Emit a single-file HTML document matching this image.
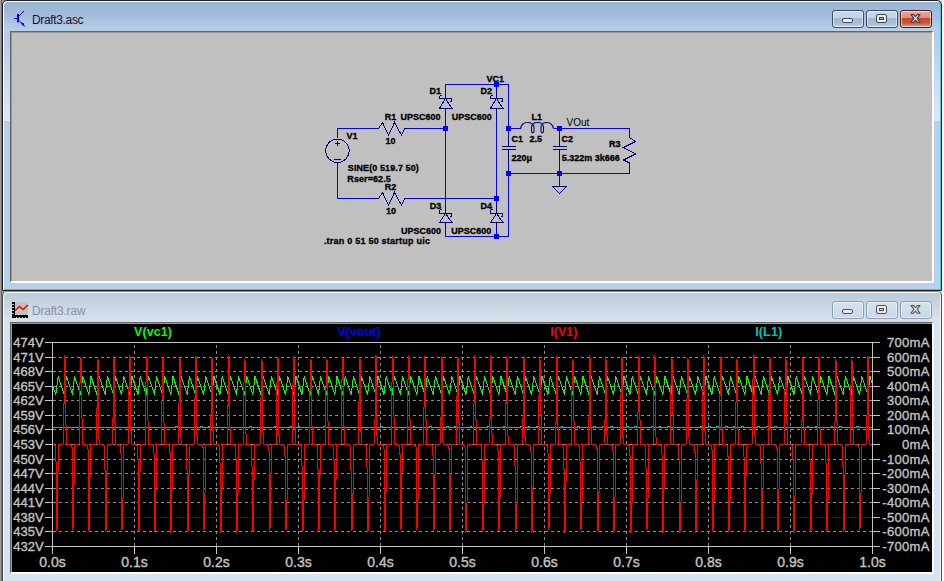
<!DOCTYPE html>
<html><head><meta charset="utf-8">
<style>
html,body{margin:0;padding:0}
body{width:944px;height:581px;overflow:hidden;position:relative;background:#fff;font-family:"Liberation Sans",sans-serif}
.abs{position:absolute}
#w1{left:2px;top:0;width:938px;height:289px;border:1px solid #1c1c1c;border-radius:5px 5px 0 0;
 background:linear-gradient(#97b2d2 0px,#a3bcda 14px,#b8cfe9 29px,#b9d0ea 100%);
 box-shadow:inset 1px 1px 0 #fff, inset -1px -1px 0 #3ec6ea}
#w2{left:2px;top:291px;width:938px;height:300px;border:1px solid #4c4c4c;border-top-color:#8e8e8e;border-radius:5px 5px 0 0;
 background:linear-gradient(#bccad8 0px,#c9d6e3 14px,#d6e2ee 29px,#d6e3f0 100%);
 box-shadow:inset 1px 1px 0 #f4f7fb, inset -1px 0 0 #f4f7fb}
.client{position:absolute;overflow:hidden}
#c1{left:10px;top:31px;width:921px;height:249px;background:#c0c0c0;
 border-top:1px solid #646464;border-left:1px solid #646464;border-right:2px solid #fff;border-bottom:2px solid #fff;
 box-shadow:inset 1px 1px 0 #989898}
#c2{left:10px;top:322px;width:921px;height:249px;background:#000;
 border-top:1px solid #646464;border-left:1px solid #646464;border-right:2px solid #fff;border-bottom:2px solid #fff;
 box-shadow:inset 1px 1px 0 #989898}
.btn{position:absolute;width:30px;height:16px;border:1px solid #3e4b5c;border-radius:3px;
 background:linear-gradient(#c6d7ea 0,#c2d4e9 7px,#a0b8d3 7px,#a9c0da 13px,#c4d6ea 16px);
 box-shadow:inset 0 0 0 1px rgba(255,255,255,.55)}
.btn.close{border-color:#4a1d1d;background:linear-gradient(#e9a99b 0,#dc8d7d 7px,#c3462a 7px,#c9553a 12px,#e0a08e 16px)}
.btn2{position:absolute;width:30px;height:16px;border:1px solid #8d9db3;border-radius:3px;
 background:linear-gradient(#d5e1ed,#cad8e7);box-shadow:inset 0 0 0 1px rgba(255,255,255,.5)}
.title{position:absolute;font-size:12px;white-space:nowrap}
svg{position:absolute;left:0;top:0}
</style></head><body>
<div class="abs" style="left:0;top:0;width:1px;height:581px;background:#a0a0a0"></div>
<div class="abs" style="left:1px;top:0;width:1px;height:581px;background:#6a6a6a"></div>
<div class="abs" style="left:2px;top:0;width:6px;height:6px;background:#8c8c8c"></div>
<div class="abs" style="left:936px;top:0;width:6px;height:6px;background:#d4d4d4"></div>
<div class="abs" style="left:2px;top:291px;width:6px;height:6px;background:#9a9a9a"></div>
<div class="abs" style="left:936px;top:291px;width:6px;height:6px;background:#d4d4d4"></div>
<div id="w1" class="abs"></div>
<div class="abs" style="left:4px;top:31px;width:6px;height:90px;background:linear-gradient(#b3cae5,#c8daee 50%,#dde8f4)"></div>
<div class="abs" style="left:934px;top:31px;width:6px;height:90px;background:linear-gradient(#b3cae5,#c8daee 50%,#dde8f4)"></div>
<div id="w2" class="abs"></div>

<!-- top window title -->
<svg width="944" height="40" style="left:0;top:0">
 <g stroke="#0000f0" fill="none">
  <path d="M14,18.5 H17" stroke-width="1"/>
  <path d="M18,14 V22.5" stroke-width="2"/>
  <path d="M19,16 L24,11" stroke-width="1"/>
  <path d="M19,20.5 L25,26.5" stroke-width="1"/>
  <path d="M21.5,23 L23.5,23.5 L23,25.5 Z" fill="#0000f0" stroke-width="1"/>
 </g>
</svg>
<div class="title" style="left:32px;top:13px;color:#1a1030;font-size:12px;letter-spacing:-0.35px">Draft3.asc</div>
<div class="btn" style="left:832px;top:10px"></div>
<div class="btn" style="left:866px;top:10px"></div>
<div class="btn close" style="left:900px;top:10px"></div>
<svg width="944" height="40" style="left:0;top:0">
 <rect x="842.5" y="18.5" width="10" height="4" rx="1.5" fill="#f0f0ee" stroke="#3c4450"/>
 <rect x="876.5" y="14.5" width="10" height="8" rx="1.5" fill="#f0f0ee" stroke="#3c4450"/>
 <rect x="879.5" y="17.5" width="4" height="2" fill="#9ab3d0" stroke="#3c4450"/>
 <path d="M911,14.6 H913.6 L915.5,16.7 L917.4,14.6 H920 L917,18.4 L920,22.2 H917.4 L915.5,20.1 L913.6,22.2 H911 L914,18.4 Z" fill="#f4f4f4" stroke="#3a3a44" stroke-width="1.1" stroke-linejoin="round"/>
</svg>

<div id="c1" class="client">
 <svg width="944" height="300" style="left:-11px;top:-32px" shape-rendering="crispEdges"><rect x="337" y="128" width="39" height="1" fill="#0000ff"/><rect x="407" y="128" width="39" height="1" fill="#0000ff"/><rect x="337" y="128" width="1" height="10" fill="#0000ff"/><rect x="337" y="162" width="1" height="37" fill="#0000ff"/><rect x="337" y="198" width="39" height="1" fill="#0000ff"/><rect x="407" y="198" width="90" height="1" fill="#0000ff"/><rect x="445" y="84" width="64" height="1" fill="#0000ff"/><rect x="445" y="84" width="1" height="7" fill="#0000ff"/><rect x="445" y="116" width="1" height="90" fill="#0000ff"/><rect x="445" y="230" width="1" height="7" fill="#0000ff"/><rect x="496" y="84" width="1" height="7" fill="#0000ff"/><rect x="496" y="116" width="1" height="90" fill="#0000ff"/><rect x="496" y="230" width="1" height="7" fill="#0000ff"/><rect x="445" y="236" width="64" height="1" fill="#0000ff"/><rect x="508" y="84" width="1" height="52" fill="#0000ff"/><rect x="508" y="160" width="1" height="77" fill="#0000ff"/><rect x="508" y="128" width="13" height="1" fill="#0000ff"/><rect x="554" y="128" width="76" height="1" fill="#0000ff"/><rect x="559" y="128" width="1" height="8" fill="#0000ff"/><rect x="559" y="160" width="1" height="27" fill="#0000ff"/><rect x="508" y="173" width="122" height="1" fill="#0000ff"/><rect x="629" y="128" width="1" height="9" fill="#0000ff"/><rect x="629" y="164" width="1" height="10" fill="#0000ff"/><rect x="445" y="91" width="1" height="7" fill="#000080"/><rect x="445" y="109" width="1" height="7" fill="#000080"/><rect x="445" y="206" width="1" height="7" fill="#000080"/><rect x="445" y="223" width="1" height="7" fill="#000080"/><rect x="496" y="91" width="1" height="7" fill="#000080"/><rect x="496" y="109" width="1" height="7" fill="#000080"/><rect x="496" y="206" width="1" height="7" fill="#000080"/><rect x="496" y="223" width="1" height="7" fill="#000080"/><rect x="508" y="136" width="1" height="10" fill="#000080"/><rect x="508" y="150" width="1" height="10" fill="#000080"/><rect x="502" y="146" width="14" height="1" fill="#000080"/><rect x="502" y="149" width="14" height="1" fill="#000080"/><rect x="559" y="136" width="1" height="10" fill="#000080"/><rect x="559" y="150" width="1" height="10" fill="#000080"/><rect x="553" y="146" width="14" height="1" fill="#000080"/><rect x="553" y="149" width="14" height="1" fill="#000080"/><rect x="376" y="128" width="3" height="1" fill="#000080"/><rect x="405" y="128" width="2" height="1" fill="#000080"/><rect x="376" y="198" width="3" height="1" fill="#000080"/><rect x="405" y="198" width="2" height="1" fill="#000080"/><path d="M439.5,95.5 V98.5 H451.5 V101.5 H449.5 M439.5,95.5 H441.5 M445.5,98.5 L439.5,108.5 H452.0 Z M490.5,95.5 V98.5 H502.5 V101.5 H500.5 M490.5,95.5 H492.5 M496.5,98.5 L490.5,108.5 H503.0 Z M439.5,209.5 V213.5 H451.5 V216.5 H449.5 M439.5,209.5 H441.5 M445.5,213.5 L439.5,222.5 H452.0 Z M490.5,209.5 V213.5 H502.5 V216.5 H500.5 M490.5,209.5 H492.5 M496.5,213.5 L490.5,222.5 H503.0 Z M378.5,128.5 L382.5,122.5 L388.5,135.2 L394.5,122.5 L401.5,135.2 L405,128.5 M378.5,198.5 L382.5,192.5 L388.5,205.2 L394.5,192.5 L401.5,205.2 L405,198.5 M629.5,136.5 V137.5 L635.5,141.5 L623.5,147.5 L635.5,154 L623.5,160 L629.5,163 V164 M552.5,186.5 H566.5 L559.5,193.5 Z M337.5,139 A11.7,11.7 0 1 1 337.4,139 Z M335,143.5 H340 M337.5,141 V146 M334,159.5 H341" fill="none" stroke="#000080" stroke-width="1"/><path d="M520.5,128.5 C521.5,124.5 523.5,122.5 527,122.5 C531,122.5 534,123.5 534,127.5 L534,131 C534,133.5 531.5,133.5 531.5,131 L531.5,127.5 C531.5,123.5 534,122.5 537.5,122.5 C541,122.5 543.5,123.5 543.5,127.5 L543.5,131 C543.5,133.5 541,133.5 541,131 L541,127.5 C541,123.5 543.5,122.5 547,122.5 C550.5,122.5 552.5,124.5 553.5,128.5" fill="none" stroke="#000080" stroke-width="1.1" shape-rendering="geometricPrecision"/><rect x="443" y="126" width="5" height="5" fill="#0000ff"/><rect x="506" y="126" width="5" height="5" fill="#0000ff"/><rect x="557" y="126" width="5" height="5" fill="#0000ff"/><rect x="494" y="82" width="5" height="5" fill="#0000ff"/><rect x="494" y="196" width="5" height="5" fill="#0000ff"/><rect x="494" y="234" width="5" height="5" fill="#0000ff"/><rect x="506" y="171" width="5" height="5" fill="#0000ff"/><rect x="557" y="171" width="5" height="5" fill="#0000ff"/><g font-family="Liberation Sans" fill="#000" stroke="#000" stroke-width="0.3"><text transform="translate(429.4,94) scale(1,1.08)" x="0" y="0" font-size="9" font-weight="bold">D1</text><text transform="translate(480.4,94) scale(1,1.08)" x="0" y="0" font-size="9" font-weight="bold">D2</text><text transform="translate(486.4,82) scale(1,1.08)" x="0" y="0" font-size="9" font-weight="bold">VC1</text><text transform="translate(384.7,120) scale(1,1.08)" x="0" y="0" font-size="9" font-weight="bold">R1</text><text transform="translate(400.59999999999997,120) scale(1,1.08)" x="0" y="0" font-size="9" font-weight="bold">UPSC600</text><text transform="translate(451.79999999999995,120) scale(1,1.08)" x="0" y="0" font-size="9" font-weight="bold">UPSC600</text><text transform="translate(531.4,120.2) scale(1,1.08)" x="0" y="0" font-size="9" font-weight="bold">L1</text><text x="566.5" y="126" font-size="10" stroke-width="0">VOut</text><text transform="translate(346.4,139) scale(1,1.08)" x="0" y="0" font-size="9" font-weight="bold">V1</text><text transform="translate(385.4,144) scale(1,1.08)" x="0" y="0" font-size="9" font-weight="bold">10</text><text transform="translate(511.4,142) scale(1,1.08)" x="0" y="0" font-size="9" font-weight="bold">C1</text><text transform="translate(529.6,142) scale(1,1.08)" x="0" y="0" font-size="9" font-weight="bold">2.5</text><text transform="translate(561.4,141.5) scale(1,1.08)" x="0" y="0" font-size="9" font-weight="bold">C2</text><text transform="translate(608.9,146.7) scale(1,1.08)" x="0" y="0" font-size="9" font-weight="bold">R3</text><text transform="translate(511.4,161) scale(1,1.08)" x="0" y="0" font-size="9" font-weight="bold">220μ</text><text transform="translate(561.8,161) scale(1,1.08)" x="0" y="0" font-size="9" font-weight="bold">5.322m 3k666</text><text transform="translate(347.79999999999995,170.7) scale(1,1.08)" x="0" y="0" font-size="9" font-weight="bold" textLength="71" lengthAdjust="spacing">SINE(0 519.7 50)</text><text transform="translate(347.29999999999995,181.7) scale(1,1.08)" x="0" y="0" font-size="9" font-weight="bold" textLength="43.5" lengthAdjust="spacing">Rser=62.5</text><text transform="translate(384.79999999999995,189.8) scale(1,1.08)" x="0" y="0" font-size="9" font-weight="bold">R2</text><text transform="translate(429.7,209.3) scale(1,1.08)" x="0" y="0" font-size="9" font-weight="bold">D3</text><text transform="translate(480.5,209.3) scale(1,1.08)" x="0" y="0" font-size="9" font-weight="bold">D4</text><text transform="translate(386.09999999999997,214) scale(1,1.08)" x="0" y="0" font-size="9" font-weight="bold">10</text><text transform="translate(400.9,234.3) scale(1,1.08)" x="0" y="0" font-size="9" font-weight="bold">UPSC600</text><text transform="translate(451.2,234.3) scale(1,1.08)" x="0" y="0" font-size="9" font-weight="bold">UPSC600</text><text transform="translate(323.9,244) scale(1,1.08)" x="0" y="0" font-size="9" font-weight="bold" textLength="106" lengthAdjust="spacing">.tran 0 51 50 startup uic</text></g></svg>
</div>

<!-- bottom window title -->
<svg width="944" height="40" style="left:0;top:290px">
 <rect x="15" y="12" width="13" height="14" fill="#c0c0c0"/>
 <path d="M15,20.5 L19.5,16.5 L23,19.5 L28,15" stroke="#ff0000" stroke-width="1.6" fill="none"/>
 <rect x="12" y="12" width="3" height="16" fill="#000"/>
 <rect x="12" y="25" width="16" height="3" fill="#000"/>
 <g fill="#c0c0c0"><rect x="12" y="14" width="2" height="1"/><rect x="12" y="17" width="2" height="1"/><rect x="12" y="20" width="2" height="1"/><rect x="12" y="23" width="2" height="1"/>
 <rect x="16" y="27" width="1" height="1"/><rect x="19" y="27" width="1" height="1"/><rect x="22" y="27" width="1" height="1"/><rect x="25" y="27" width="1" height="1"/></g>
</svg>
<div class="title" style="left:32px;top:304px;color:#8e8e9c;font-size:12px;letter-spacing:-0.2px">Draft3.raw</div>
<div class="btn2" style="left:832px;top:301px"></div>
<div class="btn2" style="left:866px;top:301px"></div>
<div class="btn2" style="left:900px;top:301px"></div>
<svg width="944" height="40" style="left:0;top:291px">
 <rect x="842.5" y="18.5" width="10" height="4" rx="1.5" fill="#eeeeec" stroke="#4a4f58"/>
 <rect x="876.5" y="14.5" width="10" height="8" rx="1.5" fill="#eeeeec" stroke="#4a4f58"/>
 <rect x="879.5" y="17.5" width="4" height="2" fill="#c8d6e6" stroke="#4a4f58"/>
 <path d="M911,14.6 H913.6 L915.5,16.7 L917.4,14.6 H920 L917,18.4 L920,22.2 H917.4 L915.5,20.1 L913.6,22.2 H911 L914,18.4 Z" fill="#f4f4f4" stroke="#55555c" stroke-width="1.1" stroke-linejoin="round"/>
</svg>

<div id="c2" class="client">
 <svg width="944" height="600" style="left:-11px;top:-323px" shape-rendering="crispEdges"><line x1="53" y1="357.5" x2="872" y2="357.5" stroke="#8c8c8c" stroke-dasharray="3 3"/><line x1="53" y1="371.5" x2="872" y2="371.5" stroke="#8c8c8c" stroke-dasharray="3 3"/><line x1="53" y1="386.5" x2="872" y2="386.5" stroke="#8c8c8c" stroke-dasharray="3 3"/><line x1="53" y1="400.5" x2="872" y2="400.5" stroke="#8c8c8c" stroke-dasharray="3 3"/><line x1="53" y1="415.5" x2="872" y2="415.5" stroke="#8c8c8c" stroke-dasharray="3 3"/><line x1="53" y1="429.5" x2="872" y2="429.5" stroke="#8c8c8c" stroke-dasharray="3 3"/><line x1="53" y1="444.5" x2="872" y2="444.5" stroke="#8c8c8c" stroke-dasharray="3 3"/><line x1="53" y1="459.5" x2="872" y2="459.5" stroke="#8c8c8c" stroke-dasharray="3 3"/><line x1="53" y1="473.5" x2="872" y2="473.5" stroke="#8c8c8c" stroke-dasharray="3 3"/><line x1="53" y1="488.5" x2="872" y2="488.5" stroke="#8c8c8c" stroke-dasharray="3 3"/><line x1="53" y1="502.5" x2="872" y2="502.5" stroke="#8c8c8c" stroke-dasharray="3 3"/><line x1="53" y1="517.5" x2="872" y2="517.5" stroke="#8c8c8c" stroke-dasharray="3 3"/><line x1="53" y1="531.5" x2="872" y2="531.5" stroke="#8c8c8c" stroke-dasharray="3 3"/><line x1="134.5" y1="345" x2="134.5" y2="546" stroke="#8c8c8c" stroke-dasharray="3 3"/><line x1="216.5" y1="345" x2="216.5" y2="546" stroke="#8c8c8c" stroke-dasharray="3 3"/><line x1="298.5" y1="345" x2="298.5" y2="546" stroke="#8c8c8c" stroke-dasharray="3 3"/><line x1="380.5" y1="345" x2="380.5" y2="546" stroke="#8c8c8c" stroke-dasharray="3 3"/><line x1="462.5" y1="345" x2="462.5" y2="546" stroke="#8c8c8c" stroke-dasharray="3 3"/><line x1="544.5" y1="345" x2="544.5" y2="546" stroke="#8c8c8c" stroke-dasharray="3 3"/><line x1="626.5" y1="345" x2="626.5" y2="546" stroke="#8c8c8c" stroke-dasharray="3 3"/><line x1="708.5" y1="345" x2="708.5" y2="546" stroke="#8c8c8c" stroke-dasharray="3 3"/><line x1="790.5" y1="345" x2="790.5" y2="546" stroke="#8c8c8c" stroke-dasharray="3 3"/><polyline points="53.00,427.50 175.00,427.50 175.50,426.50 177.50,426.50 178.00,427.50 200.00,427.50 200.50,426.50 202.50,426.50 203.00,427.50 208.00,427.50 208.50,426.50 209.50,426.50 210.00,427.50 249.00,427.50 249.50,426.50 251.50,426.50 252.00,427.50 274.00,427.50 274.50,426.50 275.50,426.50 276.00,427.50 290.00,427.50 290.50,426.50 291.50,426.50 292.00,427.50 298.00,427.50 298.50,426.50 299.50,426.50 300.00,427.50 323.00,427.50 323.50,426.50 325.50,426.50 326.00,427.50 380.00,427.50 380.50,426.50 382.50,426.50 383.00,427.50 413.00,427.50 413.50,426.50 414.50,426.50 415.00,427.50 429.00,427.50 429.50,426.50 431.50,426.50 432.00,427.50 446.00,427.50 446.50,426.50 448.50,426.50 449.00,427.50 454.00,427.50 454.50,426.50 455.50,426.50 456.00,427.50 470.00,427.50 470.50,426.50 471.50,426.50 472.00,427.50 487.00,427.50 487.50,426.50 489.50,426.50 490.00,427.50 503.00,427.50 503.50,426.50 504.50,426.50 505.00,427.50 520.00,427.50 520.50,426.50 522.50,426.50 523.00,427.50 528.00,427.50 528.50,426.50 529.50,426.50 530.00,427.50 536.00,427.50 536.50,426.50 537.50,426.50 538.00,427.50 561.00,427.50 561.50,426.50 562.50,426.50 563.00,427.50 577.00,427.50 577.50,426.50 579.50,426.50 580.00,427.50 593.00,427.50 593.50,426.50 595.50,426.50 596.00,427.50 602.00,427.50 602.50,426.50 604.50,426.50 605.00,427.50 610.00,427.50 610.50,426.50 612.50,426.50 613.00,427.50 626.00,427.50 626.50,426.50 628.50,426.50 629.00,427.50 634.00,427.50 634.50,426.50 636.50,426.50 637.00,427.50 651.00,427.50 651.50,426.50 653.50,426.50 654.00,427.50 659.00,427.50 659.50,426.50 660.50,426.50 661.00,427.50 667.00,427.50 667.50,426.50 669.50,426.50 670.00,427.50 700.00,427.50 700.50,426.50 701.50,426.50 702.00,427.50 708.00,427.50 708.50,426.50 710.50,426.50 711.00,427.50 716.00,427.50 716.50,426.50 718.50,426.50 719.00,427.50 725.00,427.50 725.50,426.50 727.50,426.50 728.00,427.50 733.00,427.50 733.50,426.50 734.50,426.50 735.00,427.50 741.00,427.50 741.50,426.50 743.50,426.50 744.00,427.50 757.00,427.50 757.50,426.50 759.50,426.50 760.00,427.50 766.00,427.50 766.50,426.50 768.50,426.50 769.00,427.50 774.00,427.50 774.50,426.50 776.50,426.50 777.00,427.50 807.00,427.50 807.50,426.50 808.50,426.50 809.00,427.50 815.00,427.50 815.50,426.50 816.50,426.50 817.00,427.50 831.00,427.50 831.50,426.50 832.50,426.50 833.00,427.50 839.00,427.50 839.50,426.50 841.50,426.50 842.00,427.50 856.00,427.50 856.50,426.50 858.50,426.50 859.00,427.50 873.00,427.50" fill="none" stroke="#00c0c0" stroke-width="1"/><rect x="53" y="517" width="820" height="1" fill="#0000ff"/><polyline points="52.50,385.50 55.80,394.50 58.20,376.50 64.20,394.50 66.40,376.50 72.40,394.50 74.60,376.50 80.60,394.50 82.80,376.50 88.80,394.50 91.00,376.50 97.00,394.50 99.20,376.50 105.20,394.50 107.40,376.50 113.40,394.50 115.60,376.50 121.60,394.50 123.80,376.50 129.80,394.50 132.00,376.50 138.00,394.50 140.20,376.50 146.20,394.50 148.40,376.50 154.40,394.50 156.60,376.50 162.60,394.50 164.80,376.50 170.80,394.50 173.00,376.50 179.00,394.50 181.20,376.50 187.20,394.50 189.40,376.50 195.40,394.50 197.60,376.50 203.60,394.50 205.80,376.50 211.80,394.50 214.00,376.50 220.00,394.50 222.20,376.50 228.20,394.50 230.40,376.50 236.40,394.50 238.60,376.50 244.60,394.50 246.80,376.50 252.80,394.50 255.00,376.50 261.00,394.50 263.20,376.50 269.20,394.50 271.40,376.50 277.40,394.50 279.60,376.50 285.60,394.50 287.80,376.50 293.80,394.50 296.00,376.50 302.00,394.50 304.20,376.50 310.20,394.50 312.40,376.50 318.40,394.50 320.60,376.50 326.60,394.50 328.80,376.50 334.80,394.50 337.00,376.50 343.00,394.50 345.20,376.50 351.20,394.50 353.40,376.50 359.40,394.50 361.60,376.50 367.60,394.50 369.80,376.50 375.80,394.50 378.00,376.50 384.00,394.50 386.20,376.50 392.20,394.50 394.40,376.50 400.40,394.50 402.60,376.50 408.60,394.50 410.80,376.50 416.80,394.50 419.00,376.50 425.00,394.50 427.20,376.50 433.20,394.50 435.40,376.50 441.40,394.50 443.60,376.50 449.60,394.50 451.80,376.50 457.80,394.50 460.00,376.50 466.00,394.50 468.20,376.50 474.20,394.50 476.40,376.50 482.40,394.50 484.60,376.50 490.60,394.50 492.80,376.50 498.80,394.50 501.00,376.50 507.00,394.50 509.20,376.50 515.20,394.50 517.40,376.50 523.40,394.50 525.60,376.50 531.60,394.50 533.80,376.50 539.80,394.50 542.00,376.50 548.00,394.50 550.20,376.50 556.20,394.50 558.40,376.50 564.40,394.50 566.60,376.50 572.60,394.50 574.80,376.50 580.80,394.50 583.00,376.50 589.00,394.50 591.20,376.50 597.20,394.50 599.40,376.50 605.40,394.50 607.60,376.50 613.60,394.50 615.80,376.50 621.80,394.50 624.00,376.50 630.00,394.50 632.20,376.50 638.20,394.50 640.40,376.50 646.40,394.50 648.60,376.50 654.60,394.50 656.80,376.50 662.80,394.50 665.00,376.50 671.00,394.50 673.20,376.50 679.20,394.50 681.40,376.50 687.40,394.50 689.60,376.50 695.60,394.50 697.80,376.50 703.80,394.50 706.00,376.50 712.00,394.50 714.20,376.50 720.20,394.50 722.40,376.50 728.40,394.50 730.60,376.50 736.60,394.50 738.80,376.50 744.80,394.50 747.00,376.50 753.00,394.50 755.20,376.50 761.20,394.50 763.40,376.50 769.40,394.50 771.60,376.50 777.60,394.50 779.80,376.50 785.80,394.50 788.00,376.50 794.00,394.50 796.20,376.50 802.20,394.50 804.40,376.50 810.40,394.50 812.60,376.50 818.60,394.50 820.80,376.50 826.80,394.50 829.00,376.50 835.00,394.50 837.20,376.50 843.20,394.50 845.40,376.50 851.40,394.50 853.60,376.50 859.60,394.50 861.80,376.50 867.80,394.50 870.00,376.50 872.50,384.21" fill="none" stroke="#00ff00" stroke-width="1"/><polyline points="52.50,444.50 54.50,444.50 55.50,446.50 55.50,461.62 56.50,462.62 56.50,530.80 57.50,527.80 57.50,472.54 58.50,471.54 58.50,444.50 62.50,444.50 63.50,443.00 63.50,404.11 64.50,403.11 64.50,355.25 65.50,358.25 65.50,424.51 66.50,425.51 66.50,444.50 70.50,444.50 71.50,446.50 71.50,446.90 72.50,447.90 72.50,529.73 73.50,526.73 73.50,485.18 74.50,484.18 74.50,444.50 78.50,444.50 79.50,443.00 79.50,383.14 80.50,382.14 80.50,357.04 81.50,360.04 81.50,417.36 82.50,418.36 82.50,444.50 86.50,444.50 87.50,446.50 87.50,448.97 88.50,449.97 88.50,531.20 89.50,528.20 89.50,477.81 90.50,476.81 90.50,444.50 95.50,444.50 96.50,443.00 96.50,408.23 97.50,407.23 97.50,358.63 98.50,361.63 98.50,439.64 99.50,440.64 99.50,444.50 103.50,444.50 104.50,446.50 104.50,469.43 105.50,470.43 105.50,531.81 106.50,528.81 106.50,471.63 107.50,470.63 107.50,444.50 111.50,444.50 112.50,443.00 112.50,418.63 113.50,417.63 113.50,356.48 114.50,359.48 114.50,422.53 115.50,423.53 115.50,444.50 119.50,444.50 120.50,446.50 120.50,453.40 121.50,454.40 121.50,530.08 122.50,527.08 122.50,498.56 123.50,497.56 123.50,444.50 127.50,444.50 128.50,443.00 128.50,388.13 129.50,387.13 129.50,355.09 130.50,358.09 130.50,430.12 131.50,431.12 131.50,444.50 136.50,444.50 137.50,446.50 137.50,459.15 138.50,460.15 138.50,532.06 139.50,529.06 139.50,472.20 140.50,471.20 140.50,444.50 144.50,444.50 145.50,443.00 145.50,382.68 146.50,381.68 146.50,356.36 147.50,359.36 147.50,420.35 148.50,421.35 148.50,444.50 152.50,444.50 153.50,446.50 153.50,453.54 154.50,454.54 154.50,532.22 155.50,529.22 155.50,490.49 156.50,489.49 156.50,444.50 160.50,444.50 161.50,443.00 161.50,400.39 162.50,399.39 162.50,356.64 163.50,359.64 163.50,422.79 164.50,423.79 164.50,444.50 168.50,444.50 169.50,446.50 169.50,451.86 170.50,452.86 170.50,532.68 171.50,529.68 171.50,490.10 172.50,489.10 172.50,444.50 177.50,444.50 178.50,443.00 178.50,403.63 179.50,402.63 179.50,357.99 180.50,360.99 180.50,437.75 181.50,438.75 181.50,444.50 185.50,444.50 186.50,446.50 186.50,469.52 187.50,470.52 187.50,532.42 188.50,529.42 188.50,474.13 189.50,473.13 189.50,444.50 193.50,444.50 194.50,443.00 194.50,398.82 195.50,397.82 195.50,355.94 196.50,358.94 196.50,434.69 197.50,435.69 197.50,444.50 201.50,444.50 202.50,446.50 202.50,446.94 203.50,447.94 203.50,530.11 204.50,527.11 204.50,493.39 205.50,492.39 205.50,444.50 209.50,444.50 210.50,443.00 210.50,414.41 211.50,413.41 211.50,356.94 212.50,359.94 212.50,429.90 213.50,430.90 213.50,444.50 218.50,444.50 219.50,446.50 219.50,462.69 220.50,463.69 220.50,533.00 221.50,530.00 221.50,490.80 222.50,489.80 222.50,444.50 226.50,444.50 227.50,443.00 227.50,406.10 228.50,405.10 228.50,356.07 229.50,359.07 229.50,426.86 230.50,427.86 230.50,444.50 234.50,444.50 235.50,446.50 235.50,457.38 236.50,458.38 236.50,532.86 237.50,529.86 237.50,493.25 238.50,492.25 238.50,444.50 242.50,444.50 243.50,443.00 243.50,382.73 244.50,381.73 244.50,359.22 245.50,362.22 245.50,433.24 246.50,434.24 246.50,444.50 250.50,444.50 251.50,446.50 251.50,465.73 252.50,466.73 252.50,532.09 253.50,529.09 253.50,479.96 254.50,478.96 254.50,444.50 259.50,444.50 260.50,443.00 260.50,397.36 261.50,396.36 261.50,359.47 262.50,362.47 262.50,432.38 263.50,433.38 263.50,444.50 267.50,444.50 268.50,446.50 268.50,450.03 269.50,451.03 269.50,529.59 270.50,526.59 270.50,474.10 271.50,473.10 271.50,444.50 275.50,444.50 276.50,443.00 276.50,382.65 277.50,381.65 277.50,356.81 278.50,359.81 278.50,434.97 279.50,435.97 279.50,444.50 283.50,444.50 284.50,446.50 284.50,455.38 285.50,456.38 285.50,530.02 286.50,527.02 286.50,500.50 287.50,499.50 287.50,444.50 291.50,444.50 292.50,443.00 292.50,383.63 293.50,382.63 293.50,355.74 294.50,358.74 294.50,426.68 295.50,427.68 295.50,444.50 300.50,444.50 301.50,446.50 301.50,465.66 302.50,466.66 302.50,531.70 303.50,528.70 303.50,500.24 304.50,499.24 304.50,444.50 308.50,444.50 309.50,443.00 309.50,392.53 310.50,391.53 310.50,358.92 311.50,361.92 311.50,425.80 312.50,426.80 312.50,444.50 316.50,444.50 317.50,446.50 317.50,468.99 318.50,469.99 318.50,530.94 319.50,527.94 319.50,475.28 320.50,474.28 320.50,444.50 324.50,444.50 325.50,443.00 325.50,387.93 326.50,386.93 326.50,358.92 327.50,361.92 327.50,421.03 328.50,422.03 328.50,444.50 332.50,444.50 333.50,446.50 333.50,460.14 334.50,461.14 334.50,530.43 335.50,527.43 335.50,479.20 336.50,478.20 336.50,444.50 340.50,444.50 341.50,443.00 341.50,380.18 342.50,379.18 342.50,356.92 343.50,359.92 343.50,425.89 344.50,426.89 344.50,444.50 349.50,444.50 350.50,446.50 350.50,468.87 351.50,469.87 351.50,530.98 352.50,527.98 352.50,494.17 353.50,493.17 353.50,444.50 357.50,444.50 358.50,443.00 358.50,403.20 359.50,402.20 359.50,357.33 360.50,360.33 360.50,431.06 361.50,432.06 361.50,444.50 365.50,444.50 366.50,446.50 366.50,467.59 367.50,468.59 367.50,532.20 368.50,529.20 368.50,497.30 369.50,496.30 369.50,444.50 373.50,444.50 374.50,443.00 374.50,419.35 375.50,418.35 375.50,354.77 376.50,357.77 376.50,435.74 377.50,436.74 377.50,444.50 382.50,444.50 383.50,446.50 383.50,448.48 384.50,449.48 384.50,531.07 385.50,528.07 385.50,492.20 386.50,491.20 386.50,444.50 390.50,444.50 391.50,443.00 391.50,382.80 392.50,381.80 392.50,356.49 393.50,359.49 393.50,416.75 394.50,417.75 394.50,444.50 398.50,444.50 399.50,446.50 399.50,454.16 400.50,455.16 400.50,530.34 401.50,527.34 401.50,471.84 402.50,470.84 402.50,444.50 406.50,444.50 407.50,443.00 407.50,380.01 408.50,379.01 408.50,355.31 409.50,358.31 409.50,418.93 410.50,419.93 410.50,444.50 414.50,444.50 415.50,446.50 415.50,446.61 416.50,447.61 416.50,529.91 417.50,526.91 417.50,500.60 418.50,499.60 418.50,444.50 422.50,444.50 423.50,443.00 423.50,407.63 424.50,406.63 424.50,356.32 425.50,359.32 425.50,418.86 426.50,419.86 426.50,444.50 431.50,444.50 432.50,446.50 432.50,454.74 433.50,455.74 433.50,530.51 434.50,527.51 434.50,474.30 435.50,473.30 435.50,444.50 439.50,444.50 440.50,443.00 440.50,418.20 441.50,417.20 441.50,356.24 442.50,359.24 442.50,440.82 443.50,441.82 443.50,444.50 447.50,444.50 448.50,446.50 448.50,448.06 449.50,449.06 449.50,531.36 450.50,528.36 450.50,473.58 451.50,472.58 451.50,444.50 455.50,444.50 456.50,443.00 456.50,395.42 457.50,394.42 457.50,356.92 458.50,359.92 458.50,421.88 459.50,422.88 459.50,444.50 463.50,444.50 464.50,446.50 464.50,446.55 465.50,447.55 465.50,532.82 466.50,529.82 466.50,503.28 467.50,502.28 467.50,444.50 472.50,444.50 473.50,443.00 473.50,403.77 474.50,402.77 474.50,355.31 475.50,358.31 475.50,418.81 476.50,419.81 476.50,444.50 480.50,444.50 481.50,446.50 481.50,458.67 482.50,459.67 482.50,531.67 483.50,528.67 483.50,504.25 484.50,503.25 484.50,444.50 488.50,444.50 489.50,443.00 489.50,418.85 490.50,417.85 490.50,354.64 491.50,357.64 491.50,433.10 492.50,434.10 492.50,444.50 496.50,444.50 497.50,446.50 497.50,450.01 498.50,451.01 498.50,530.54 499.50,527.54 499.50,497.02 500.50,496.02 500.50,444.50 504.50,444.50 505.50,443.00 505.50,403.97 506.50,402.97 506.50,356.33 507.50,359.33 507.50,435.26 508.50,436.26 508.50,444.50 513.50,444.50 514.50,446.50 514.50,465.48 515.50,466.48 515.50,530.82 516.50,527.82 516.50,504.47 517.50,503.47 517.50,444.50 521.50,444.50 522.50,443.00 522.50,418.37 523.50,417.37 523.50,355.62 524.50,358.62 524.50,435.96 525.50,436.96 525.50,444.50 529.50,444.50 530.50,446.50 530.50,451.44 531.50,452.44 531.50,532.77 532.50,529.77 532.50,488.12 533.50,487.12 533.50,444.50 537.50,444.50 538.50,443.00 538.50,396.00 539.50,395.00 539.50,358.20 540.50,361.20 540.50,415.75 541.50,416.75 541.50,444.50 546.50,444.50 547.50,446.50 547.50,452.22 548.50,453.22 548.50,529.61 549.50,526.61 549.50,494.24 550.50,493.24 550.50,444.50 554.50,444.50 555.50,443.00 555.50,423.04 556.50,422.04 556.50,355.90 557.50,358.90 557.50,426.63 558.50,427.63 558.50,444.50 562.50,444.50 563.50,446.50 563.50,468.92 564.50,469.92 564.50,533.25 565.50,530.25 565.50,482.76 566.50,481.76 566.50,444.50 570.50,444.50 571.50,443.00 571.50,389.92 572.50,388.92 572.50,359.44 573.50,362.44 573.50,420.90 574.50,421.90 574.50,444.50 578.50,444.50 579.50,446.50 579.50,460.98 580.50,461.98 580.50,530.29 581.50,527.29 581.50,501.51 582.50,500.51 582.50,444.50 587.50,444.50 588.50,443.00 588.50,417.82 589.50,416.82 589.50,355.52 590.50,358.52 590.50,427.47 591.50,428.47 591.50,444.50 595.50,444.50 596.50,446.50 596.50,448.03 597.50,449.03 597.50,532.11 598.50,529.11 598.50,493.12 599.50,492.12 599.50,444.50 603.50,444.50 604.50,443.00 604.50,420.94 605.50,419.94 605.50,358.50 606.50,361.50 606.50,435.34 607.50,436.34 607.50,444.50 611.50,444.50 612.50,446.50 612.50,450.28 613.50,451.28 613.50,532.50 614.50,529.50 614.50,497.62 615.50,496.62 615.50,444.50 619.50,444.50 620.50,443.00 620.50,394.96 621.50,393.96 621.50,356.89 622.50,359.89 622.50,435.82 623.50,436.82 623.50,444.50 628.50,444.50 629.50,446.50 629.50,455.63 630.50,456.63 630.50,533.39 631.50,530.39 631.50,503.14 632.50,502.14 632.50,444.50 636.50,444.50 637.50,443.00 637.50,412.62 638.50,411.62 638.50,356.48 639.50,359.48 639.50,419.42 640.50,420.42 640.50,444.50 644.50,444.50 645.50,446.50 645.50,467.72 646.50,468.72 646.50,530.01 647.50,527.01 647.50,498.23 648.50,497.23 648.50,444.50 652.50,444.50 653.50,443.00 653.50,386.58 654.50,385.58 654.50,355.26 655.50,358.26 655.50,436.49 656.50,437.49 656.50,444.50 660.50,444.50 661.50,446.50 661.50,454.41 662.50,455.41 662.50,533.42 663.50,530.42 663.50,489.20 664.50,488.20 664.50,444.50 669.50,444.50 670.50,443.00 670.50,385.89 671.50,384.89 671.50,357.79 672.50,360.79 672.50,415.37 673.50,416.37 673.50,444.50 677.50,444.50 678.50,446.50 678.50,458.64 679.50,459.64 679.50,533.38 680.50,530.38 680.50,502.68 681.50,501.68 681.50,444.50 685.50,444.50 686.50,443.00 686.50,399.52 687.50,398.52 687.50,357.75 688.50,360.75 688.50,437.67 689.50,438.67 689.50,444.50 693.50,444.50 694.50,446.50 694.50,452.04 695.50,453.04 695.50,532.80 696.50,529.80 696.50,480.25 697.50,479.25 697.50,444.50 701.50,444.50 702.50,443.00 702.50,390.82 703.50,389.82 703.50,355.56 704.50,358.56 704.50,430.25 705.50,431.25 705.50,444.50 710.50,444.50 711.50,446.50 711.50,449.15 712.50,450.15 712.50,530.54 713.50,527.54 713.50,501.85 714.50,500.85 714.50,444.50 718.50,444.50 719.50,443.00 719.50,395.92 720.50,394.92 720.50,356.60 721.50,359.60 721.50,426.91 722.50,427.91 722.50,444.50 726.50,444.50 727.50,446.50 727.50,456.10 728.50,457.10 728.50,531.83 729.50,528.83 729.50,502.12 730.50,501.12 730.50,444.50 734.50,444.50 735.50,443.00 735.50,402.57 736.50,401.57 736.50,359.02 737.50,362.02 737.50,428.83 738.50,429.83 738.50,444.50 742.50,444.50 743.50,446.50 743.50,456.56 744.50,457.56 744.50,531.59 745.50,528.59 745.50,476.41 746.50,475.41 746.50,444.50 751.50,444.50 752.50,443.00 752.50,380.18 753.50,379.18 753.50,354.59 754.50,357.59 754.50,435.78 755.50,436.78 755.50,444.50 759.50,444.50 760.50,446.50 760.50,463.40 761.50,464.40 761.50,530.19 762.50,527.19 762.50,489.48 763.50,488.48 763.50,444.50 767.50,444.50 768.50,443.00 768.50,394.67 769.50,393.67 769.50,356.87 770.50,359.87 770.50,428.48 771.50,429.48 771.50,444.50 775.50,444.50 776.50,446.50 776.50,448.55 777.50,449.55 777.50,531.72 778.50,528.72 778.50,489.61 779.50,488.61 779.50,444.50 783.50,444.50 784.50,443.00 784.50,391.18 785.50,390.18 785.50,358.42 786.50,361.42 786.50,422.20 787.50,423.20 787.50,444.50 791.50,444.50 792.50,446.50 792.50,459.48 793.50,460.48 793.50,532.59 794.50,529.59 794.50,496.60 795.50,495.60 795.50,444.50 800.50,444.50 801.50,443.00 801.50,421.06 802.50,420.06 802.50,357.04 803.50,360.04 803.50,426.52 804.50,427.52 804.50,444.50 808.50,444.50 809.50,446.50 809.50,458.29 810.50,459.29 810.50,531.95 811.50,528.95 811.50,494.25 812.50,493.25 812.50,444.50 816.50,444.50 817.50,443.00 817.50,400.36 818.50,399.36 818.50,357.03 819.50,360.03 819.50,428.87 820.50,429.87 820.50,444.50 824.50,444.50 825.50,446.50 825.50,462.78 826.50,463.78 826.50,531.41 827.50,528.41 827.50,500.68 828.50,499.68 828.50,444.50 833.50,444.50 834.50,443.00 834.50,422.40 835.50,421.40 835.50,359.21 836.50,362.21 836.50,421.75 837.50,422.75 837.50,444.50 841.50,444.50 842.50,446.50 842.50,466.16 843.50,467.16 843.50,531.74 844.50,528.74 844.50,474.80 845.50,473.80 845.50,444.50 849.50,444.50 850.50,443.00 850.50,385.47 851.50,384.47 851.50,359.22 852.50,362.22 852.50,426.50 853.50,427.50 853.50,444.50 857.50,444.50 858.50,446.50 858.50,447.75 859.50,448.75 859.50,529.79 860.50,526.79 860.50,493.43 861.50,492.43 861.50,444.50 865.50,444.50 866.50,443.00 866.50,415.28 867.50,414.28 867.50,355.70 868.50,358.70 868.50,438.32 869.50,439.32 869.50,444.50 872.50,444.50" fill="none" stroke="#ff0000" stroke-width="1"/><rect x="52" y="342" width="821" height="1" fill="#c4c4c4"/><rect x="52" y="546" width="821" height="1" fill="#c4c4c4"/><rect x="52" y="342" width="1" height="212" fill="#c4c4c4"/><rect x="872" y="342" width="1" height="212" fill="#c4c4c4"/><rect x="45" y="342" width="7" height="1" fill="#c4c4c4"/><rect x="873" y="342" width="7" height="1" fill="#c4c4c4"/><rect x="45" y="357" width="7" height="1" fill="#c4c4c4"/><rect x="873" y="357" width="7" height="1" fill="#c4c4c4"/><rect x="45" y="371" width="7" height="1" fill="#c4c4c4"/><rect x="873" y="371" width="7" height="1" fill="#c4c4c4"/><rect x="45" y="386" width="7" height="1" fill="#c4c4c4"/><rect x="873" y="386" width="7" height="1" fill="#c4c4c4"/><rect x="45" y="400" width="7" height="1" fill="#c4c4c4"/><rect x="873" y="400" width="7" height="1" fill="#c4c4c4"/><rect x="45" y="415" width="7" height="1" fill="#c4c4c4"/><rect x="873" y="415" width="7" height="1" fill="#c4c4c4"/><rect x="45" y="429" width="7" height="1" fill="#c4c4c4"/><rect x="873" y="429" width="7" height="1" fill="#c4c4c4"/><rect x="45" y="444" width="7" height="1" fill="#c4c4c4"/><rect x="873" y="444" width="7" height="1" fill="#c4c4c4"/><rect x="45" y="459" width="7" height="1" fill="#c4c4c4"/><rect x="873" y="459" width="7" height="1" fill="#c4c4c4"/><rect x="45" y="473" width="7" height="1" fill="#c4c4c4"/><rect x="873" y="473" width="7" height="1" fill="#c4c4c4"/><rect x="45" y="488" width="7" height="1" fill="#c4c4c4"/><rect x="873" y="488" width="7" height="1" fill="#c4c4c4"/><rect x="45" y="502" width="7" height="1" fill="#c4c4c4"/><rect x="873" y="502" width="7" height="1" fill="#c4c4c4"/><rect x="45" y="517" width="7" height="1" fill="#c4c4c4"/><rect x="873" y="517" width="7" height="1" fill="#c4c4c4"/><rect x="45" y="531" width="7" height="1" fill="#c4c4c4"/><rect x="873" y="531" width="7" height="1" fill="#c4c4c4"/><rect x="45" y="546" width="7" height="1" fill="#c4c4c4"/><rect x="873" y="546" width="7" height="1" fill="#c4c4c4"/><rect x="134" y="546" width="1" height="8" fill="#c4c4c4"/><rect x="216" y="546" width="1" height="8" fill="#c4c4c4"/><rect x="298" y="546" width="1" height="8" fill="#c4c4c4"/><rect x="380" y="546" width="1" height="8" fill="#c4c4c4"/><rect x="462" y="546" width="1" height="8" fill="#c4c4c4"/><rect x="544" y="546" width="1" height="8" fill="#c4c4c4"/><rect x="626" y="546" width="1" height="8" fill="#c4c4c4"/><rect x="708" y="546" width="1" height="8" fill="#c4c4c4"/><rect x="790" y="546" width="1" height="8" fill="#c4c4c4"/><g font-family="Liberation Sans" font-size="13" fill="#c4c4c4" stroke="#c4c4c4" stroke-width="0.35"><text x="43.6" y="347" text-anchor="end">474V</text><text x="929.7" y="347" text-anchor="end" letter-spacing="0.3">700mA</text><text x="43.6" y="362" text-anchor="end">471V</text><text x="929.7" y="362" text-anchor="end" letter-spacing="0.3">600mA</text><text x="43.6" y="376" text-anchor="end">468V</text><text x="929.7" y="376" text-anchor="end" letter-spacing="0.3">500mA</text><text x="43.6" y="391" text-anchor="end">465V</text><text x="929.7" y="391" text-anchor="end" letter-spacing="0.3">400mA</text><text x="43.6" y="405" text-anchor="end">462V</text><text x="929.7" y="405" text-anchor="end" letter-spacing="0.3">300mA</text><text x="43.6" y="420" text-anchor="end">459V</text><text x="929.7" y="420" text-anchor="end" letter-spacing="0.3">200mA</text><text x="43.6" y="434" text-anchor="end">456V</text><text x="929.7" y="434" text-anchor="end" letter-spacing="0.3">100mA</text><text x="43.6" y="449" text-anchor="end">453V</text><text x="929.7" y="449" text-anchor="end" letter-spacing="0.3">0mA</text><text x="43.6" y="464" text-anchor="end">450V</text><text x="929.7" y="464" text-anchor="end" letter-spacing="0.3">-100mA</text><text x="43.6" y="478" text-anchor="end">447V</text><text x="929.7" y="478" text-anchor="end" letter-spacing="0.3">-200mA</text><text x="43.6" y="493" text-anchor="end">444V</text><text x="929.7" y="493" text-anchor="end" letter-spacing="0.3">-300mA</text><text x="43.6" y="507" text-anchor="end">441V</text><text x="929.7" y="507" text-anchor="end" letter-spacing="0.3">-400mA</text><text x="43.6" y="522" text-anchor="end">438V</text><text x="929.7" y="522" text-anchor="end" letter-spacing="0.3">-500mA</text><text x="43.6" y="536" text-anchor="end">435V</text><text x="929.7" y="536" text-anchor="end" letter-spacing="0.3">-600mA</text><text x="43.6" y="551" text-anchor="end">432V</text><text x="929.7" y="551" text-anchor="end" letter-spacing="0.3">-700mA</text><text x="52.5" y="567" text-anchor="middle" font-size="14">0.0s</text><text x="134.5" y="567" text-anchor="middle" font-size="14">0.1s</text><text x="216.5" y="567" text-anchor="middle" font-size="14">0.2s</text><text x="298.5" y="567" text-anchor="middle" font-size="14">0.3s</text><text x="380.5" y="567" text-anchor="middle" font-size="14">0.4s</text><text x="462.5" y="567" text-anchor="middle" font-size="14">0.5s</text><text x="544.5" y="567" text-anchor="middle" font-size="14">0.6s</text><text x="626.5" y="567" text-anchor="middle" font-size="14">0.7s</text><text x="708.5" y="567" text-anchor="middle" font-size="14">0.8s</text><text x="790.5" y="567" text-anchor="middle" font-size="14">0.9s</text><text x="872.5" y="567" text-anchor="middle" font-size="14">1.0s</text></g><g font-family="Liberation Sans" font-weight="bold" font-size="13"><text x="134" y="336" fill="#00ff00" textLength="38" lengthAdjust="spacingAndGlyphs">V(vc1)</text><text x="337.4" y="336" fill="#0000ff" textLength="43" lengthAdjust="spacingAndGlyphs">V(vout)</text><text x="550.3" y="336" fill="#ff0000" textLength="27" lengthAdjust="spacingAndGlyphs">I(V1)</text><text x="755.3" y="336" fill="#00c0c0" textLength="27" lengthAdjust="spacingAndGlyphs">I(L1)</text></g></svg>
</div>
</body></html>
